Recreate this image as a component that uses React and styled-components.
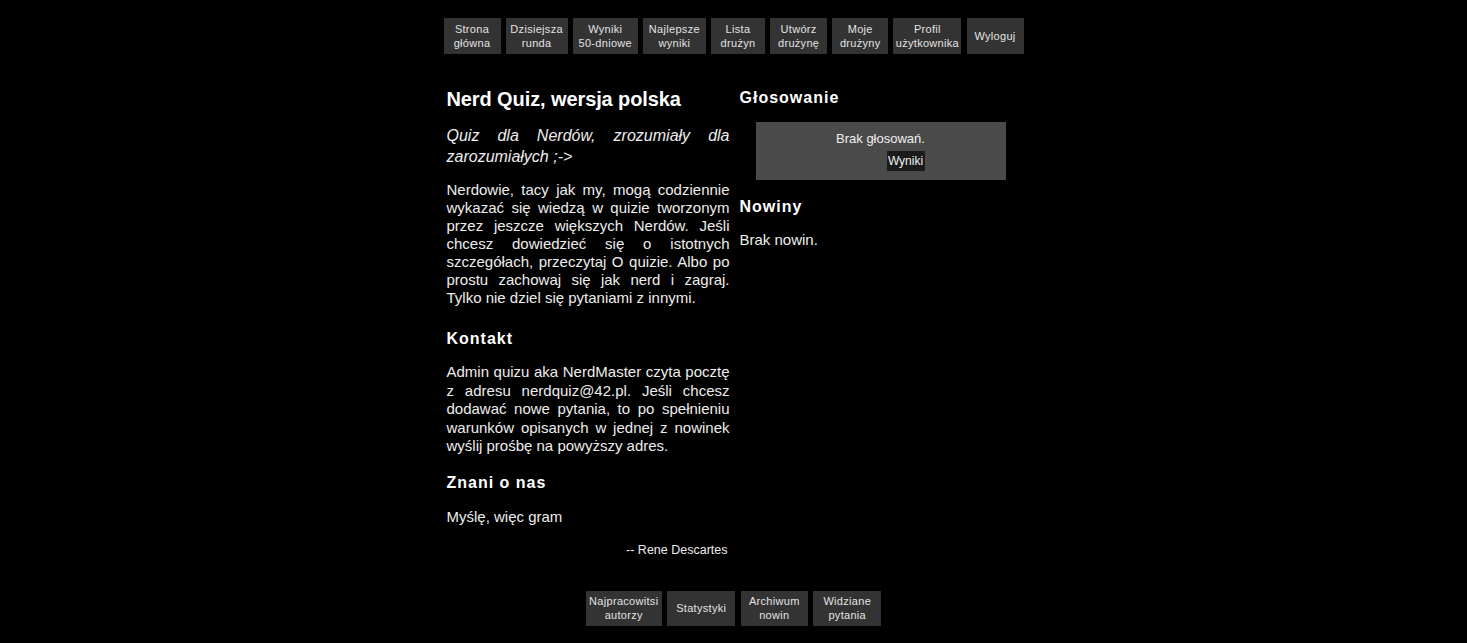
import React from "react";
import styled, { createGlobalStyle } from "styled-components";

const GlobalStyle = createGlobalStyle`
  html, body {
    margin: 0;
    padding: 0;
    background: #000;
  }
  body {
    font-family: "Liberation Sans", Arial, sans-serif;
    color: #ededed;
  }
`;

const Page = styled.div`
  width: 580px;
  margin: 0 auto;
  padding-top: 18px;
`;

const Menu = styled.nav`
  display: flex;
  justify-content: space-between;
`;

const FooterMenu = styled.nav`
  display: flex;
  justify-content: center;
  gap: 5.5px;
  margin-top: 33px;
`;

const MenuButton = styled.a`
  display: flex;
  align-items: center;
  justify-content: center;
  box-sizing: border-box;
  width: ${(p) => p.$w}px;
  height: ${(p) => p.$h || 36}px;
  background: #333;
  color: #e2e2e2;
  font-size: 11px;
  line-height: 14px;
  letter-spacing: 0.3px;
  text-align: center;
  cursor: pointer;
`;

const Main = styled.main`
  display: grid;
  grid-template-columns: 283px 284px;
  column-gap: 10px;
  padding-left: 3px;
  margin-top: 33px;
`;

const Column = styled.section`
  display: flex;
  flex-direction: column;
`;

const Title = styled.h1`
  margin: 0;
  font-size: 20px;
  line-height: 24px;
  font-weight: bold;
  color: #fff;
  letter-spacing: -0.1px;
`;

const Heading = styled.h3`
  margin: ${(p) => p.$mt || 0}px 0 0;
  font-size: 16px;
  line-height: 20px;
  font-weight: bold;
  letter-spacing: 1px;
  color: #fff;
`;

const Intro = styled.p`
  margin: 14px 0 0;
  font-size: 16px;
  line-height: 21px;
  font-style: italic;
  text-align: justify;
`;

const Text = styled.p`
  margin: ${(p) => p.$mt || 15}px 0 0;
  font-size: 15px;
  line-height: ${(p) => p.$lh || 18}px;
  text-align: justify;
`;

const Quote = styled.p`
  margin: 16px 2px 0 0;
  font-size: 12.5px;
  line-height: 16px;
  text-align: right;
`;

const PollBox = styled.div`
  width: 250px;
  margin: 14px 0 0 16px;
  padding: 9px 0;
  background: #4a4a4a;
  text-align: center;
  font-size: 13px;
  line-height: 16px;
  color: #f0f0f0;
`;

const PollRow = styled.div`
  margin-top: 4px;
  height: 20px;
`;

const SmallButton = styled.button`
  margin-left: 50px;
  height: 20px;
  width: 38px;
  padding: 0;
  border: none;
  background: #1b1b1b;
  color: #f0f0f0;
  font-family: "Liberation Sans", Arial, sans-serif;
  font-size: 12px;
  line-height: 20px;
  vertical-align: top;
`;

const topMenu = [
  ["Strona", "główna", 57],
  ["Dzisiejsza", "runda", 62],
  ["Wyniki", "50-dniowe", 65],
  ["Najlepsze", "wyniki", 63],
  ["Lista", "drużyn", 54],
  ["Utwórz", "drużynę", 57],
  ["Moje", "drużyny", 56],
  ["Profil", "użytkownika", 68],
  ["Wyloguj", null, 57],
];

const bottomMenu = [
  ["Najpracowitsi", "autorzy", 76],
  ["Statystyki", null, 68],
  ["Archiwum", "nowin", 67],
  ["Widziane", "pytania", 68],
];

const renderButton = ([a, b, w], h) => (
  <MenuButton key={a} $w={w} $h={h}>
    <span>
      {a}
      {b && <br />}
      {b}
    </span>
  </MenuButton>
);

export default function App() {
  return (
    <>
      <GlobalStyle />
      <Page>
        <Menu>{topMenu.map((item) => renderButton(item, 36))}</Menu>

        <Main>
          <Column>
            <Title>Nerd Quiz, wersja polska</Title>
            <Intro>Quiz dla Nerdów, zrozumiały dla zarozumiałych ;-&gt;</Intro>
            <Text $mt={14}>
              Nerdowie, tacy jak my, mogą codziennie wykazać się wiedzą w
              quizie tworzonym przez jeszcze większych Nerdów. Jeśli chcesz
              dowiedzieć się o istotnych szczegółach, przeczytaj O quizie. Albo
              po prostu zachowaj się jak nerd i zagraj. Tylko nie dziel się
              pytaniami z innymi.
            </Text>

            <Heading $mt={22}>Kontakt</Heading>
            <Text $mt={14} $lh={18.5}>
              Admin quizu aka NerdMaster czyta pocztę z adresu nerdquiz@42.pl.
              Jeśli chcesz dodawać nowe pytania, to po spełnieniu warunków
              opisanych w jednej z nowinek wyślij prośbę na powyższy adres.
            </Text>

            <Heading $mt={17}>Znani o nas</Heading>
            <Text $mt={15}>Myślę, więc gram</Text>
            <Quote>-- Rene Descartes</Quote>
          </Column>

          <Column>
            <Heading $mt={1}>Głosowanie</Heading>
            <PollBox>
              Brak głosowań.
              <PollRow>
                <SmallButton>Wyniki</SmallButton>
              </PollRow>
            </PollBox>
            <Heading $mt={17}>Nowiny</Heading>
            <Text $mt={14}>Brak nowin.</Text>
          </Column>
        </Main>

        <FooterMenu>{bottomMenu.map((item) => renderButton(item, 35))}</FooterMenu>
      </Page>
    </>
  );
}
